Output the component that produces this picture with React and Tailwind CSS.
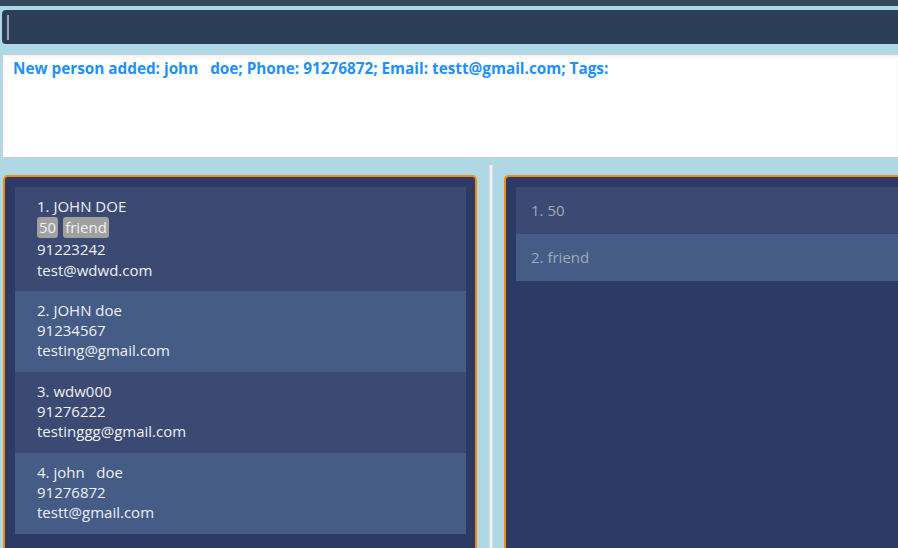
import React from 'react';

const persons = [
  { name: 'JOHN DOE', tags: ['50', 'friend'], phone: '91223242', email: 'test@wdwd.com' },
  { name: 'JOHN doe', tags: [], phone: '91234567', email: 'testing@gmail.com' },
  { name: 'wdw000', tags: [], phone: '91276222', email: 'testinggg@gmail.com' },
  { name: 'john   doe', tags: [], phone: '91276872', email: 'testt@gmail.com' },
];

const tags = ['50', 'friend'];

const font = { fontFamily: '"Open Sans", "Noto Sans", sans-serif' };

const PersonCard = ({ person, idx }) => {
  const bg = idx % 2 === 0 ? 'bg-[#3c4a73]' : 'bg-[#455c87]';
  return (
    <div className={`${bg} pl-[22px] pt-[9px] pb-[11px] text-[15px] leading-[20.3px] text-[#eef0f6]`}>
      <div className="whitespace-pre">{idx + 1}. {person.name}</div>
      {person.tags.length > 0 && (
        <div className="flex gap-[5px] py-[1px]">
          {person.tags.map((t) => (
            <span key={t} className="bg-[#a0a0a0] rounded-[3px] px-[2px] leading-[21px]">
              {t}
            </span>
          ))}
        </div>
      )}
      <div>{person.phone}</div>
      <div>{person.email}</div>
    </div>
  );
};

export default function App() {
  return (
    <div className="w-[898px] h-[548px] overflow-hidden bg-[#add8e6] flex flex-col" style={font}>
      <div className="h-[6px] shrink-0 bg-[#35495e]" />

      {/* command box */}
      <div className="pt-[4px] pl-[2px] shrink-0">
        <div className="h-[34px] rounded-l-[4px] bg-[#2c3e57] flex items-center pl-[5px]">
          <div className="w-[2px] h-[25px] bg-[#9aa3b0]" />
        </div>
      </div>

      {/* result display */}
      <div className="pt-[10px] pl-[2px] shrink-0">
        <div className="h-[104px] bg-white border-t border-b border-l border-[#cfcfcf] shadow-[inset_0_2px_3px_rgba(0,0,0,0.06)] pl-[10px] pt-[2px]">
          <p className="whitespace-pre font-bold text-[15.3px] text-[#1e90ff]">
            New person added: john   doe; Phone: 91276872; Email: testt@gmail.com; Tags:
          </p>
        </div>
      </div>

      <div className="h-[6px] shrink-0" />
      <div className="h-[1px] shrink-0 bg-[#c9cfd2]" />

      {/* lists */}
      <div className="flex shrink-0 h-[420px]">
        <div className="pt-[10px] pl-[3px] w-[477px]">
          <div className="h-full border-2 border-[#f58a07] rounded-[5px] bg-[#2d3a66] p-[10px] pr-[9px]">
            {persons.map((p, i) => (
              <PersonCard key={i} person={p} idx={i} />
            ))}
          </div>
        </div>

        <div className="w-[12px]" />
        <div className="w-[4px] bg-[#f1f3f4] border-x border-[#d8dcde]" />
        <div className="w-[11px]" />

        <div className="pt-[10px] flex-1">
          <div className="h-full border-2 border-r-0 border-[#f58a07] rounded-l-[5px] bg-[#2d3a66] pt-[10px] pl-[10px]">
            {tags.map((t, i) => (
              <div
                key={t}
                className={`${i % 2 === 0 ? 'bg-[#3c4a73]' : 'bg-[#455c87]'} h-[47px] flex items-center pl-[15px] text-[15px] text-[#a4a8b2]`}
              >
                {i + 1}. {t}
              </div>
            ))}
          </div>
        </div>
      </div>
    </div>
  );
}
